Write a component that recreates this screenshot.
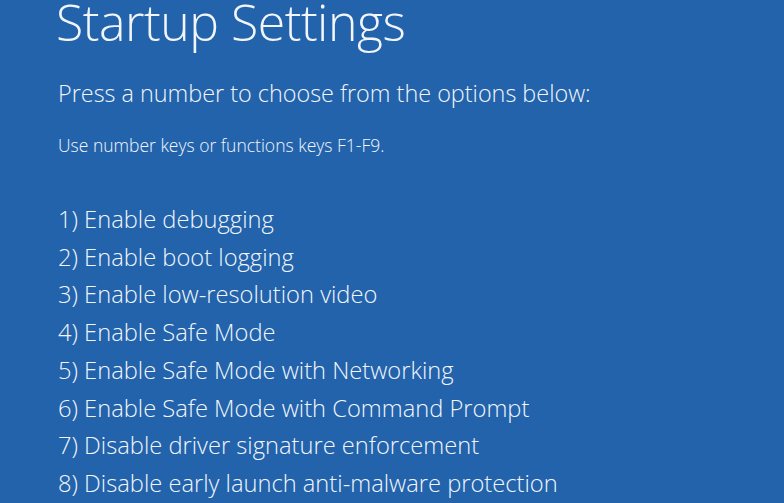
export default function App() {
  const items = [
    "1) Enable debugging",
    "2) Enable boot logging",
    "3) Enable low-resolution video",
    "4) Enable Safe Mode",
    "5) Enable Safe Mode with Networking",
    "6) Enable Safe Mode with Command Prompt",
    "7) Disable driver signature enforcement",
    "8) Disable early launch anti-malware protection",
  ];
  return (
    <div
      className="w-[784px] h-[503px] overflow-hidden bg-[#2263ac] text-[#f2f6fb] pl-[56px]"
      style={{ fontFamily: '"Open Sans", "Noto Sans", sans-serif' }}
    >
      <div className="text-[50px] font-light leading-[44px] tracking-[-0.5px]">Startup Settings</div>
      <div className="mt-[33px] text-[23.4px] font-light leading-[32px] pl-[2px]">
        Press a number to choose from the options below:
      </div>
      <div className="mt-[24px] text-[17.5px] font-light leading-[24px] pl-[2px]">
        Use number keys or functions keys F1-F9.
      </div>
      <div className="mt-[44px] pl-[2px]">
        {items.map((t) => (
          <div key={t} className="text-[23.7px] font-light leading-[37.7px]">
            {t}
          </div>
        ))}
      </div>
    </div>
  );
}
